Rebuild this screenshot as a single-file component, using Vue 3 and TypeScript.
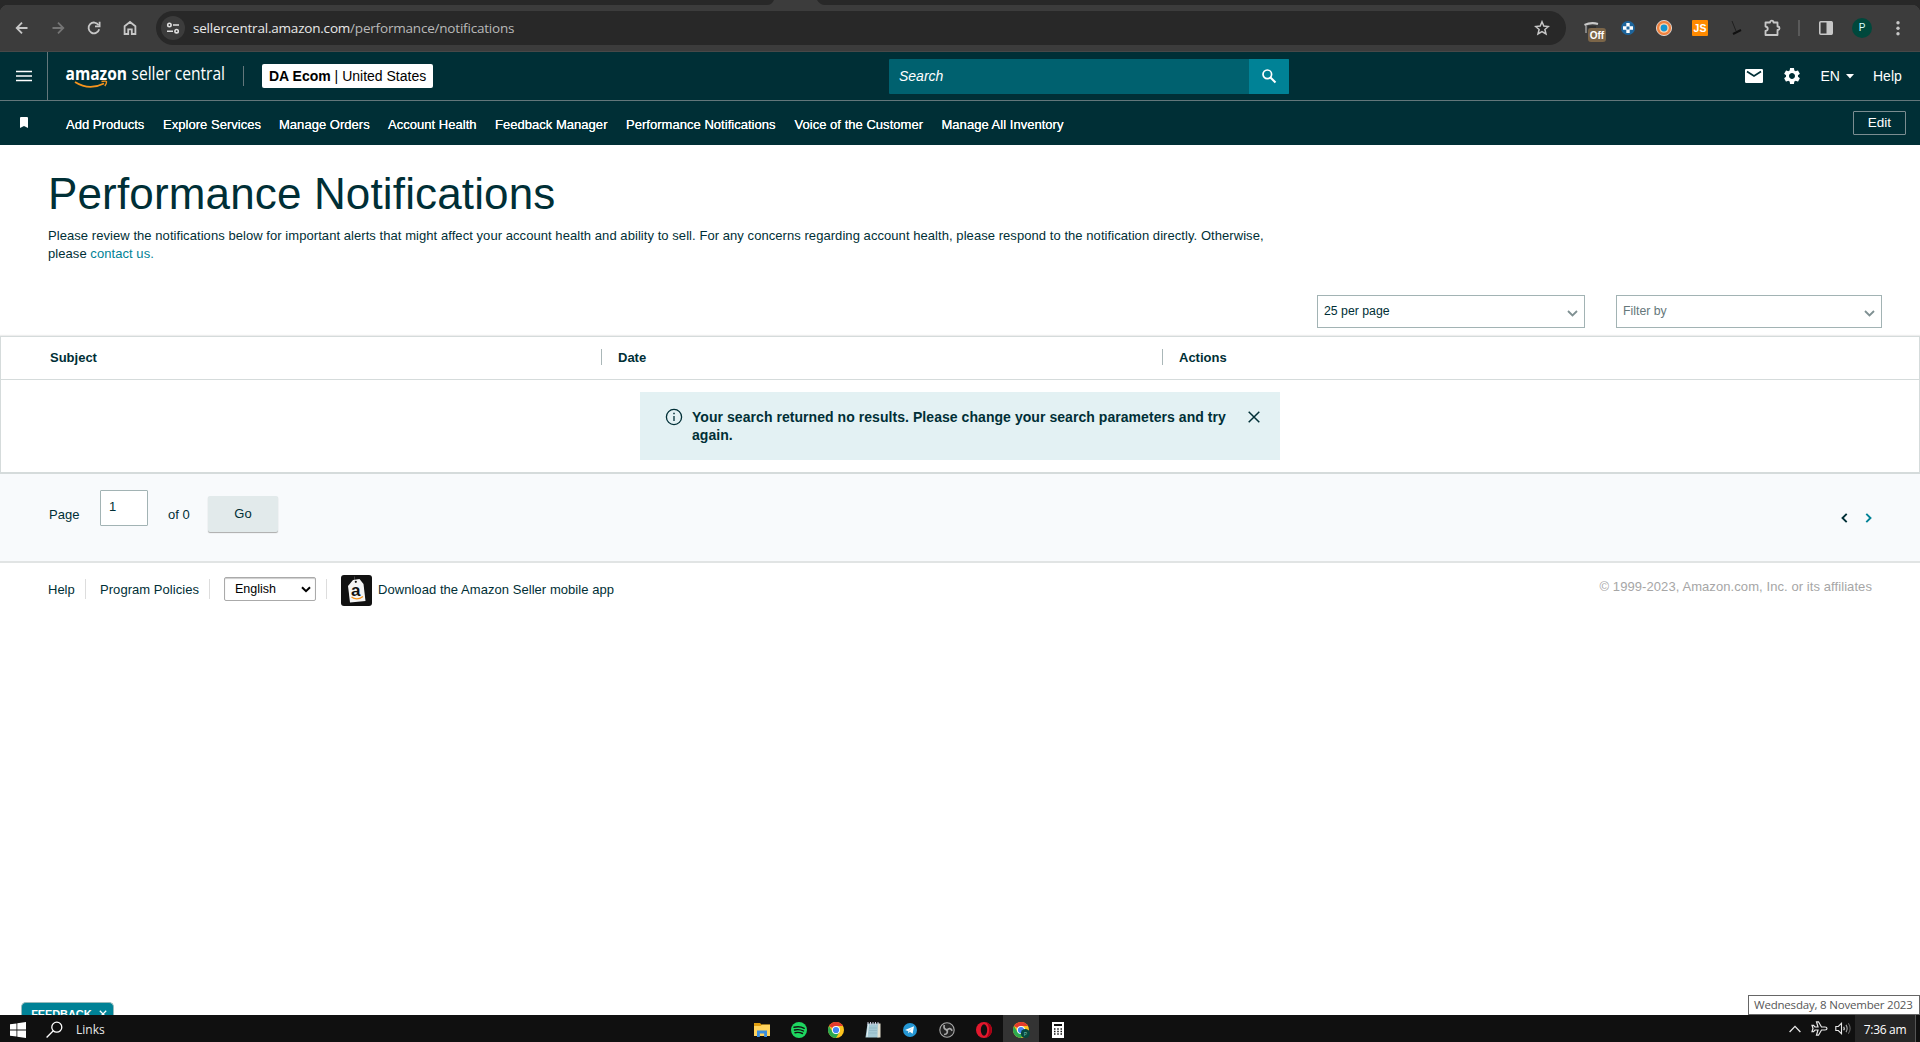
<script setup lang="ts">
interface NavLink {
  label: string
  width: number
}

const navLinks: NavLink[] = [
  { label: 'Add Products', width: 79 },
  { label: 'Explore Services', width: 98 },
  { label: 'Manage Orders', width: 91 },
  { label: 'Account Health', width: 89 },
  { label: 'Feedback Manager', width: 113 },
  { label: 'Performance Notifications', width: 150.5 },
  { label: 'Voice of the Customer', width: 129 },
  { label: 'Manage All Inventory', width: 123 },
]
</script>

<template>
  <div class="screen">
    <div class="tabstrip">
      <svg width="58" height="5" viewBox="0 0 58 5"><path d="M0 5Q5 5 7 0H50Q53 5 58 5Z" fill="#3c3c3c" /></svg>
    </div>
    <div class="toolbar">
      <span class="slot"><svg width="16" height="16" viewBox="0 0 16 16" fill="none" stroke="#c7c7c7" stroke-width="1.8"><path d="M13.5 8H3M8 2.7L2.7 8L8 13.3" /></svg></span>
      <span class="slot"><svg width="16" height="16" viewBox="0 0 16 16" fill="none" stroke="#757575" stroke-width="1.8"><path d="M2.5 8H13M8 2.7L13.3 8L8 13.3" /></svg></span>
      <span class="slot"><svg width="16" height="16" viewBox="0 0 16 16" fill="none" stroke="#c7c7c7" stroke-width="1.8"><path d="M13.2 9.3A5.4 5.4 0 1 1 12.6 5.1" /><path d="M13.6 1.8V6.3H9" /></svg></span>
      <span class="slot"><svg width="16" height="16" viewBox="0 0 16 16" fill="none" stroke="#c7c7c7" stroke-width="1.8"><path d="M2.6 14V6.2L8 2L13.4 6.2V14H9.8V9.3H6.2V14Z" /></svg></span>
      <div class="omnibox">
        <span class="tune"><svg width="14" height="14" viewBox="0 0 14 14" fill="none" stroke="#e0e0e0" stroke-width="1.6"><circle cx="3.4" cy="4" r="1.7" /><path d="M7 4H13M1 10.2H7" /><circle cx="10.6" cy="10.2" r="1.7" /></svg></span>
        <span class="url">sellercentral.amazon.com<span class="path">/performance/notifications</span></span>
        <svg class="star" width="16" height="16" viewBox="0 0 16 16" fill="none" stroke="#c7c7c7" stroke-width="1.5"><path d="M8 1.8L9.8 6.1L14.4 6.5L10.9 9.5L12 14L8 11.6L4 14L5.1 9.5L1.6 6.5L6.2 6.1Z" /></svg>
      </div>
      <span class="slot first-ext">
        <svg width="16" height="16" viewBox="0 0 16 16" fill="none"><path d="M0.5 5Q7 2 14 4" stroke="#c9c9c9" stroke-width="2.2" /><path d="M2 6V13" stroke="#aaa" stroke-width="1.3" /><path d="M4 7H12" stroke="#222" /></svg>
        <b class="off">Off</b>
      </span>
      <span class="slot"><svg width="16" height="16" viewBox="0 0 16 16"><circle cx="8" cy="8" r="7" fill="#1d659c" /><path d="M6.3 3H9.7V6.3H13V9.7H9.7V13H6.3V9.7H3V6.3H6.3Z" fill="#fff" /><path d="M6.5 6.5h3v3h-3Z" fill="#1d659c" /></svg></span>
      <span class="slot"><svg width="16" height="16" viewBox="0 0 16 16"><circle cx="8" cy="8" r="7.6" fill="#ef8240" stroke="#eee" stroke-width=".8" /><circle cx="8" cy="8" r="4.8" fill="#ffd6ae" /><circle cx="8" cy="8" r="3.4" fill="#1696d2" /></svg></span>
      <span class="slot"><b class="js">JS</b></span>
      <span class="slot"><svg width="16" height="16" viewBox="0 0 16 16" fill="none" stroke="#111"><path d="M4 1L8 11" stroke-width=".7" /><path d="M5 14L13 10" stroke-width="2" /></svg></span>
      <span class="slot"><svg width="18" height="18" viewBox="0 0 18 18" fill="none" stroke="#c7c7c7" stroke-width="1.8"><path d="M2.5 3.5H7C7 1 10.5 1 10.5 3.5H14.5V7.5C17.2 7.5 17.2 11 14.5 11V16H2.5V12C5.5 11.5 5.5 8 2.5 7.5Z" stroke-linejoin="round" /></svg></span>
      <span class="ext-divider"></span>
      <span class="slot"><svg width="16" height="16" viewBox="0 0 16 16"><rect x="1.8" y="1.8" width="12.4" height="12.4" rx="1" fill="none" stroke="#c7c7c7" stroke-width="1.6" /><path d="M8.5 1.5H14V14.5H8.5Z" fill="#c7c7c7" /></svg></span>
      <span class="slot"><span class="avatar">P</span></span>
      <span class="slot"><svg width="16" height="16" viewBox="0 0 16 16" fill="#c7c7c7"><circle cx="8" cy="2.8" r="1.7" /><circle cx="8" cy="8.3" r="1.7" /><circle cx="8" cy="13.8" r="1.7" /></svg></span>
    </div>

    <header class="masthead">
      <div class="menu-btn"><svg width="16" height="12" viewBox="0 0 16 12"><path d="M0 1.5H16M0 6H16M0 10.5H16" stroke="#fff" stroke-width="1.7" /></svg></div>
      <svg class="logo" width="160" height="40" viewBox="0 0 160 40">
        <text x="-.5" y="22" font-size="17" font-weight="700" textLength="61.5" lengthAdjust="spacingAndGlyphs">amazon</text>
        <text x="65.5" y="22" font-size="18" font-weight="400" textLength="93.5" lengthAdjust="spacingAndGlyphs">seller central</text>
        <path d="M9 24Q23 33 38 25.5" fill="none" stroke="#f7941d" stroke-width="1.8" /><path d="M35.500 23.5Q41 22.5 40.5 24Q40.500 26 38.800 28" fill="none" stroke="#f7941d" stroke-width="1.4" />
      </svg>
      <span class="logo-divider"></span>
      <div class="account"><b>DA Ecom</b><span> | United States</span></div>
      <div class="search">
        <span class="search-input">Search</span>
        <span class="search-btn"><svg width="16" height="16" viewBox="0 0 16 16" fill="none" stroke="#fff"><circle cx="6.3" cy="6.3" r="4.3" stroke-width="1.7" /><path d="M9.5 9.5L14.5 14.5" stroke-width="2" /></svg></span>
      </div>
      <div class="head-tools">
        <svg class="mail" width="18" height="14" viewBox="0 0 18 14"><rect width="18" height="14" rx="1.2" fill="#fff" /><path d="M2 2.5L9 7L16 2.5" fill="none" stroke="#002f36" stroke-width="1.7" /></svg>
        <svg class="gear" width="20" height="20" viewBox="0 0 24 24" fill="#fff"><path d="M19.14 12.94c.04-.3.06-.61.06-.94 0-.32-.02-.64-.07-.94l2.03-1.58c.18-.14.23-.41.12-.61l-1.92-3.32c-.12-.22-.37-.29-.59-.22l-2.39.96c-.5-.38-1.03-.7-1.62-.94l-.36-2.54c-.04-.24-.24-.41-.48-.41h-3.84c-.24 0-.43.17-.47.41l-.36 2.54c-.59.24-1.13.57-1.62.94l-2.39-.96c-.22-.08-.47 0-.59.22L2.74 8.87c-.12.21-.08.47.12.61l2.03 1.58c-.05.3-.09.63-.09.94s.02.64.07.94l-2.03 1.58c-.18.14-.23.41-.12.61l1.92 3.32c.12.22.37.29.59.22l2.39-.96c.5.38 1.03.7 1.62.94l.36 2.54c.05.24.24.41.48.41h3.84c.24 0 .44-.17.47-.41l.36-2.54c.59-.24 1.13-.56 1.62-.94l2.39.96c.22.08.47 0 .59-.22l1.92-3.32c.12-.22.07-.47-.12-.61l-2.01-1.58zM12 15.6c-1.98 0-3.6-1.62-3.6-3.6s1.62-3.6 3.6-3.6 3.6 1.62 3.6 3.6-1.62 3.6-3.6 3.6z" /></svg>
        <span class="lang">EN</span>
        <svg class="caret" width="8" height="5" viewBox="0 0 8 5"><path d="M0 0H8L4 4.5Z" fill="#fff" /></svg>
        <span class="help">Help</span>
      </div>
    </header>

    <nav class="favorites">
      <svg class="bookmark" width="8" height="11" viewBox="0 0 8 11"><path d="M1 0H7Q8 0 8 1V11L4 9L0 11V1Q0 0 1 0Z" fill="#fff" /></svg>
      <div class="links">
        <span v-for="link in navLinks" :key="link.label" :style="{ width: link.width + 'px' }">{{ link.label }}</span>
      </div>
      <span class="edit">Edit</span>
    </nav>

    <main>
      <h1>Performance Notifications</h1>
      <p class="intro">Please review the notifications below for important alerts that might affect your account health and ability to sell. For any concerns regarding account health, please respond to the notification directly. Otherwise,<br />please <a>contact us.</a></p>
      <div class="filters">
        <div class="dropdown per-page">25 per page<svg width="11" height="7" viewBox="0 0 11 7"><path d="M1 1L5.5 5.5L10 1" /></svg></div>
        <div class="dropdown filter-by">Filter by<svg width="11" height="7" viewBox="0 0 11 7"><path d="M1 1L5.5 5.5L10 1" /></svg></div>
      </div>

      <section class="table">
        <div class="thead">
          <span class="col subject">Subject</span>
          <span class="col date">Date</span>
          <span class="col actions">Actions</span>
        </div>
        <div class="alert">
          <svg class="info" width="18" height="18" viewBox="0 0 18 18" fill="none" stroke="#002f36"><circle cx="9" cy="9" r="7.6" stroke-width="1.3" /><path d="M9 8V13" stroke-width="1.3" /><path d="M9 4.8V6.3" stroke-width="1.5" /></svg>
          <strong>Your search returned no results. Please change your search parameters and try<br />again.</strong>
          <svg class="close" width="12" height="12" viewBox="0 0 12 12"><path d="M.7 .7L11.3 11.3M11.3 .7L.7 11.3" stroke="#002f36" stroke-width="1.5" /></svg>
        </div>
      </section>

      <section class="pager">
        <span class="page-label">Page</span>
        <span class="page-input">1</span>
        <span class="page-of">of 0</span>
        <span class="go">Go</span>
        <div class="arrows">
          <svg width="7" height="10" viewBox="0 0 7 10"><path d="M5.7 .8L1.5 5L5.7 9.2" stroke="#002f36" /></svg>
          <svg width="7" height="10" viewBox="0 0 7 10"><path d="M1.3 .8L5.5 5L1.3 9.2" stroke="#008296" /></svg>
        </div>
      </section>

      <footer>
        <span class="f-help">Help</span>
        <i class="sep s1"></i>
        <span class="f-policies">Program Policies</span>
        <i class="sep s2"></i>
        <span class="f-select">English<svg width="10" height="7" viewBox="0 0 10 7"><path d="M1 1.2L5 5.2L9 1.2" fill="none" stroke="#000" stroke-width="2" /></svg></span>
        <i class="sep s3"></i>
        <svg class="app-logo" width="31" height="31" viewBox="0 0 31 31">
          <rect width="31" height="31" rx="3" fill="#111" />
          <path d="M13.5 1.5V6" stroke="#444" />
          <path d="M12 5L18.5 4L22.5 9L24.5 26L9 27.5L7 11Z" fill="#f5f5f5" />
          <circle cx="14.8" cy="6.8" r="1.1" fill="#111" />
          <text x="10" y="20.5" font-size="17" font-weight="700" fill="#111">a</text>
          <path d="M10.5 22Q16 26 22 21.5" fill="none" stroke="#f7941d" stroke-width="1.4" />
        </svg>
        <span class="f-app">Download the Amazon Seller mobile app</span>
        <span class="copyright">© 1999-2023, Amazon.com, Inc. or its affiliates</span>
      </footer>
      <div class="overlay-row">
        <div class="feedback">FEEDBACK<svg width="8" height="8" viewBox="0 0 8 8"><path d="M.8 .8L7.2 7.2M7.2 .8L.8 7.2" stroke="#fff" stroke-width="1.3" /></svg></div>
        <div class="date-tip">Wednesday, 8 November 2023</div>
      </div>
    </main>

    <div class="taskbar">
      <svg class="win" width="16" height="16" viewBox="0 0 16 16" fill="#fff"><path d="M0 2.3L6.5 1.4V7.6H0ZM7.3 1.3L16 0V7.6H7.3ZM0 8.4H6.5V14.6L0 13.7ZM7.3 8.4H16V16L7.3 14.7Z" /></svg>
      <svg class="find" width="17" height="17" viewBox="0 0 17 17" fill="none" stroke="#fff" stroke-width="1.3"><circle cx="10.8" cy="6.2" r="5" /><path d="M7.3 9.8L.6 16.5" /></svg>
      <span class="links-label">Links</span>
      <div class="apps">
        <span class="app"><svg width="16" height="16" viewBox="0 0 16 16"><path d="M0 1H6L7.5 2.5H16V5H0Z" fill="#e09d0e" /><path d="M0 4H6.5L8 2.8H16V14H0Z" fill="#ffd35c" /><path d="M3 8.5H13V15H10.2V11.5H5.8V15H3Z" fill="#3b8ede" /></svg></span>
        <span class="app"><svg width="16" height="16" viewBox="0 0 16 16"><circle cx="8" cy="8" r="8" fill="#1ed760" /><path d="M3 5.3Q8.5 3.8 13.3 6.3M3.5 8Q8.5 6.8 12.5 9M4 10.7Q8 9.8 11.5 11.5" fill="none" stroke="#111" stroke-width="1.4" stroke-linecap="round" /></svg></span>
        <span class="app"><svg width="16" height="16" viewBox="0 0 16 16"><circle cx="8" cy="8" r="8" fill="#fcc31e" /><path d="M8 8L1.07 4A8 8 0 0 1 14.93 4H8Z" fill="#e33b2e" /><path d="M1.07 4A8 8 0 0 0 8 16L11.46 10L4.54 10Z" fill="#2da94f" /><circle cx="8" cy="8" r="4" fill="#fff" /><circle cx="8" cy="8" r="3.1" fill="#4285f4" /></svg></span>
        <span class="app"><svg width="16" height="16" viewBox="0 0 16 16"><path d="M2.5 1.5H14L13.5 15.5H0.5Z" fill="#a5c9d4" /><path d="M13 1.5H15.5V15.5H12.5Z" fill="#e4e0cf" /><path d="M2 15L3.5 2" stroke="#e8f3f5" /><path d="M3 0V3M5.5 0V3M8 0V3M10.5 0V3M13 0V3" stroke="#ccd" stroke-width="1" /><path d="M4 6H12M4 8.5H12M3.5 11H12" stroke="#8cb2c0" stroke-width=".7" /></svg></span>
        <span class="app"><svg width="16" height="16" viewBox="0 0 16 16"><circle cx="8" cy="8" r="7" fill="#2597d4" /><path d="M3 8L12 4.3L10.6 11.7L7.8 9.8L6.4 11.2L6 8.9Z" fill="#fff" /><path d="M6 8.9L10.5 5.8L7.3 9.5L6.4 11.2Z" fill="#bcdcf0" /></svg></span>
        <span class="app"><svg width="16" height="16" viewBox="0 0 16 16" fill="none" stroke="#a8a8a8"><circle cx="8" cy="8" r="7.2" fill="#222" stroke-width="1.1" /><path d="M8 8Q4 7 5.3 3M8 8Q11 5 13.2 8.7M8 8Q9.5 12 5 12.5" stroke-width="1.7" /><circle cx="8" cy="8" r="1.3" fill="#a8a8a8" stroke="none" /></svg></span>
        <span class="app"><svg width="16" height="16" viewBox="0 0 16 16"><circle cx="8" cy="8" r="8" fill="#e3182d" /><path d="M10 .3A8 8 0 0 1 10 15.7Q13 13 13 8T10 .3Z" fill="#a70014" /><ellipse cx="8" cy="8" rx="3.2" ry="5.7" fill="#101010" /></svg></span>
        <span class="app active"><svg width="17" height="16" viewBox="0 0 17 16"><circle cx="8" cy="8" r="8" fill="#fcc31e" /><path d="M8 8L1.07 4A8 8 0 0 1 14.93 4H8Z" fill="#e33b2e" /><path d="M1.07 4A8 8 0 0 0 8 16L11.46 10L4.54 10Z" fill="#2da94f" /><circle cx="8" cy="8" r="4" fill="#fff" /><circle cx="8" cy="8" r="3.1" fill="#4285f4" /><circle cx="12.3" cy="11.5" r="4.5" fill="#06483f" /><text x="10.7" y="13.7" font-size="5.5" fill="#7fc4b4">P</text></svg></span>
        <span class="app"><svg width="12" height="16" viewBox="0 0 12 16"><rect width="12" height="16" fill="#fff" /><path d="M2 2H10V4H2Z" fill="#111" /><path d="M2 7H10M2 9.5H10M2 12H10" stroke="#111" stroke-width="1.3" stroke-dasharray="1.5 1.75" /></svg></span>
      </div>
      <div class="tray">
        <svg width="12" height="8" viewBox="0 0 12 8" fill="none" stroke="#e8e8e8" stroke-width="1.3"><path d="M.6 7L6 1.4L11.4 7" /></svg>
        <svg class="plane" width="17" height="15" viewBox="0 0 17 15" fill="none" stroke="#e8e8e8" stroke-width="1.2"><path d="M16 7.5Q16 6 14 6H10.5L7.5 .8H5.5L7 6H4L2.5 4.3H1L2 7.5L1 10.7H2.5L4 9H7L5.5 14.2H7.5L10.5 9H14Q16 9 16 7.5Z" /></svg>
        <svg class="volume" width="17" height="13" viewBox="0 0 17 13" fill="none" stroke="#e8e8e8" stroke-width="1.1"><path d="M.8 4.5H3.3L6.5 1.3V11.7L3.3 8.5H.8Z" /><path d="M8.7 4.7Q9.8 6.5 8.7 8.3" /><path d="M11 2.9Q13.3 6.5 11 10.1" stroke="#aaa" /><path d="M13.3 1.2Q17 6.5 13.3 11.8" stroke="#666" /></svg>
        <span class="clock">7:36 am</span>
      </div>
    </div>
  </div>
</template>

<style>
body { margin: 0; overflow: hidden; }
</style>

<style scoped>
.screen { width: 1920px; height: 1042px; display: flex; flex-direction: column; overflow: hidden; background: #fff; color: #002f36; font-family: "Liberation Sans", Arial, sans-serif; font-size: 13px; white-space: nowrap; }
.screen * { box-sizing: border-box; }
svg { display: block; flex: none; }
.tabstrip { height: 5px; flex: none; background: #282828; padding-left: 767px; }
.toolbar { height: 47px; flex: none; display: flex; align-items: center; padding: 0 4px; border-bottom: 1px solid #484848; background: radial-gradient(circle at 8px 8px, #3c3c3c 8px, #282828 8.5px) 0 0 / 8px 8px no-repeat, radial-gradient(circle at 0 8px, #3c3c3c 8px, #282828 8.5px) 100% 0 / 8px 8px no-repeat, #3c3c3c; }
.slot { width: 36px; height: 36px; flex: none; display: flex; align-items: center; justify-content: center; position: relative; }
.omnibox { width: 1410px; height: 34px; margin-left: 8px; flex: none; border-radius: 17px; background: #282828; display: flex; align-items: center; padding: 0 16px 0 5px; }
.tune { width: 24px; height: 24px; border-radius: 50%; background: #3c3c3c; display: flex; align-items: center; justify-content: center; }
.url { margin-left: 8px; font-family: "Open Sans", "Noto Sans", sans-serif; font-size: 13.5px; letter-spacing: -.2px; line-height: 20px; color: #e8e8e8; }
.path { color: #b9b9b9; }
.star { margin-left: auto; }
.first-ext { margin-left: 8px; }
.off { position: absolute; left: 14px; top: 18px; width: 18px; height: 14px; border-radius: 3px; background: #7b6548; color: #fff; font-size: 10px; line-height: 15px; text-align: center; }
.js { width: 16px; height: 16px; background: #ff8a00; color: #fff; font-size: 10.5px; line-height: 16px; text-align: center; border-radius: 1px; }
.ext-divider { width: 2px; height: 16px; margin: 0 8px; background: #5a5a5a; }
.avatar { width: 20px; height: 20px; border-radius: 50%; background: #00483c; color: #dff; font-size: 10px; line-height: 20px; text-align: center; }
.masthead { height: 49px; flex: none; display: flex; align-items: center; background: #002f36; border-bottom: 1px solid #63777b; color: #fff; font-size: 14px; }
.menu-btn { width: 48px; height: 48px; border-right: 1px solid #63777b; display: flex; align-items: center; padding-left: 16px; }
.logo { margin-left: 18px; margin-top: 4px; fill: #fff; font-family: "Open Sans", "Noto Sans", sans-serif; overflow: visible; }
.logo-divider { width: 1px; height: 20px; margin-left: 17px; background: #63777b; }
.account { width: 171px; height: 24px; margin-left: 18px; background: #fff; border-radius: 2px; color: #000; line-height: 24px; padding-left: 7px; white-space: pre; }
.search { width: 400px; height: 35px; margin-left: 456px; display: flex; background: #00616f; border-radius: 1px; overflow: hidden; }
.search-input { width: 360px; padding-left: 10px; line-height: 35px; font-style: italic; }
.search-btn { width: 40px; background: #008296; display: flex; align-items: center; justify-content: center; }
.head-tools { display: flex; align-items: center; margin-left: 456px; }
.gear { margin-left: 19px; }
.lang { margin-left: 18.5px; width: 20px; }
.caret { margin-left: 5.5px; }
.help { margin-left: 19px; }
.favorites { height: 44px; flex: none; display: flex; align-items: center; background: #002f36; color: #fff; padding: 0 14px 0 20px; }
.bookmark { margin-top: -2px; }
.links { display: flex; gap: 18px; margin-left: 38px; padding-top: 3px; letter-spacing: .03px; text-shadow: 0 0 .5px #fff; }
.links span { flex: none; }
.edit { margin-left: auto; width: 53px; height: 24px; border: 1px solid #7b8d91; border-radius: 1px; font-size: 13.5px; line-height: 21px; text-align: center; }
main { flex: 1; min-height: 0; display: flex; flex-direction: column; }
h1 { margin: 22px 0 0 48px; font-size: 44px; line-height: 54px; font-weight: 400; letter-spacing: .15px; }
.intro { margin: 6px 0 0 48px; font-size: 13px; letter-spacing: .06px; line-height: 18px; }
.intro a { color: #008296; }
.filters { display: flex; justify-content: flex-end; gap: 31px; margin-top: 32px; padding-right: 38px; }
.dropdown { height: 33px; border: 1px solid #a2b3b4; display: flex; justify-content: space-between; padding: 0 6px; line-height: 30px; font-size: 12.3px; }
.dropdown svg { margin-top: 14px; fill: none; stroke: #7f9092; stroke-width: 1.8; }
.per-page { width: 268px; }
.filter-by { width: 266px; color: #66787b; }
.table { margin-top: 8px; height: 138px; border: 1px solid #d5dbdb; border-bottom-width: 2px; flex: none; box-shadow: 0 -1px 1px #eee; }
.thead { height: 43px; display: flex; align-items: center; padding-bottom: 2px; border-bottom: 1px solid #d5dbdb; font-weight: 700; }
.col { height: 16px; line-height: 17px; padding-left: 16px; border-left: 1px solid #aab7b8; }
.subject { width: 600px; padding-left: 49px; border: 0; }
.date { width: 561px; }
.alert { width: 640px; height: 68px; margin: 12px auto 0; background: #e3f1f3; display: flex; padding: 16px 20px 0 25px; font-size: 14px; line-height: 18px; }
.alert strong { margin-left: 9px; letter-spacing: .055px; }
.close { margin: 3px 0 0 auto; }
.pager { height: 89px; flex: none; background: #f8fafc; border-bottom: 2px solid #e1e4e4; display: flex; align-items: flex-start; }
.page-label { width: 51px; margin-left: 49px; padding-top: 33px; }
.page-input { width: 48px; height: 36px; margin-top: 16px; padding-left: 8px; line-height: 32px; background: #fff; border: 1px solid #a2b3b4; border-radius: 1px; }
.page-of { width: 40px; margin-left: 20px; padding-top: 33px; }
.go { width: 70px; height: 36px; margin-top: 22px; background: #e2eaeb; border-radius: 2px; box-shadow: 0 1px 1px #aaa; line-height: 35px; text-align: center; }
.arrows { display: flex; gap: 17.5px; margin: 38.5px 48px 0 auto; fill: none; stroke-width: 1.9; }
footer { display: flex; height: 52px; flex: none; align-items: center; }
.f-help { margin-left: 48px; width: 37px; }
.sep { width: 1px; height: 20px; background: #ddd; }
.f-policies { margin-left: 14px; width: 109px; letter-spacing: .05px; }
.f-select { margin-left: 14px; width: 92px; height: 24px; border: 1px solid #aaa; border-radius: 2px; box-shadow: inset 0 1px 1px #ccc; display: flex; align-items: center; justify-content: space-between; padding: 0 4px 0 10px; color: #000; font-size: 12.5px; }
.s3 { margin-left: 10px; }
.app-logo { margin: 2px 0 0 14px; }
.f-app { margin-left: 6px; letter-spacing: .05px; }
.copyright { margin: -5px 48px 0 auto; color: #a6a6a6; letter-spacing: .08px; }
.overlay-row { margin-top: auto; height: 20px; flex: none; display: flex; align-items: flex-end; justify-content: space-between; overflow: hidden; }
.feedback { width: 93px; height: 13px; margin-left: 20.5px; border-radius: 5px 5px 0 0; border: 1px solid #9bb; border-bottom: 0; background: #008296; color: #fff; font-weight: 700; font-size: 11px; letter-spacing: -.1px; line-height: 23px; display: flex; justify-content: flex-end; padding-right: 6px; gap: 7px; overflow: hidden; }
.feedback svg { margin-top: 7px; }
.date-tip { width: 172px; height: 20px; border: 1px solid #666; background: #fff; color: #575757; font-family: "Open Sans", "Noto Sans", sans-serif; font-size: 11.5px; letter-spacing: -.2px; line-height: 18px; padding-left: 5px; }
.taskbar { height: 27px; flex: none; background: #101010; color: #e8e8e8; display: flex; align-items: center; padding-top: 2px; font-family: "Open Sans", "Noto Sans", sans-serif; font-size: 12px; }
.win { margin-left: 10px; }
.find { margin-left: 20px; }
.links-label { margin-left: 13px; width: 36px; }
.apps { display: flex; gap: 1px; margin: -2px 0 0 632px; }
.app { width: 36px; height: 27px; padding-top: 3px; display: flex; align-items: center; justify-content: center; }
.active { background: #333; }
.tray { display: flex; align-items: center; margin: -2px 4px 0 auto; height: 27px; border-right: 1px solid #555; }
.plane { margin-left: 10px; }
.volume { margin: 0 3px 0 7px; }
.clock { width: 60px; height: 27px; background: #252525; line-height: 29px; letter-spacing: -.3px; text-align: center; color: #fff; }
</style>
